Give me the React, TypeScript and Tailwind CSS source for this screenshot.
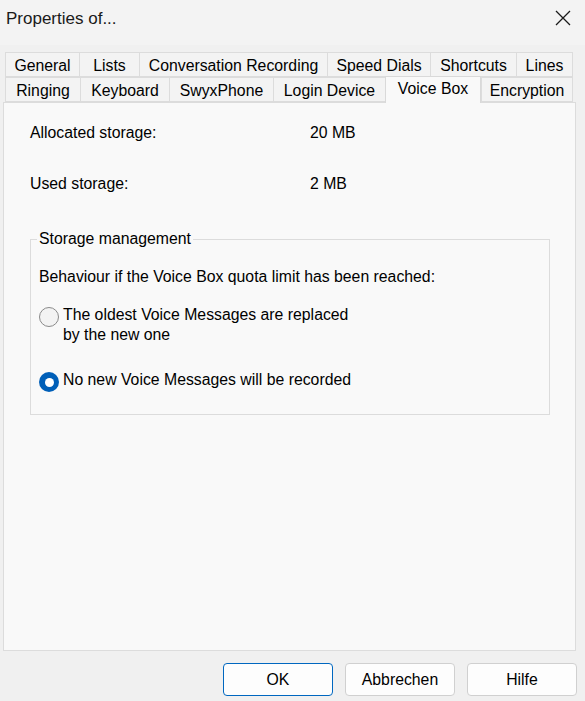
import React from "react";

const row1 = [
  { label: "General", w: 74 },
  { label: "Lists", w: 60 },
  { label: "Conversation Recording", w: 188 },
  { label: "Speed Dials", w: 103 },
  { label: "Shortcuts", w: 86 },
  { label: "Lines", w: 57 },
];

const row2 = [
  { label: "Ringing", w: 75 },
  { label: "Keyboard", w: 89 },
  { label: "SwyxPhone", w: 104 },
  { label: "Login Device", w: 112 },
  { label: "Voice Box", w: 96, active: true },
  { label: "Encryption", w: 92 },
];

const Tab = ({ label, w, active }: { label: string; w: number; active?: boolean }) => (
  <div
    style={{ width: w }}
    className={
      active
        ? "relative z-10 -mt-[1px] h-[27px] -mb-[1px] flex items-start justify-center pt-[1px] border border-b-0 border-[#d9d9d9] bg-[#f9f9f9] text-[15.8px] leading-[22px]"
        : "h-[25px] flex items-center justify-center pt-[2px] border border-r-0 border-[#dcdcdc] bg-[#f3f3f3] text-[15.8px] leading-[22px] last:border-r"
    }
  >
    {label}
  </div>
);

const Radio = ({ checked }: { checked?: boolean }) =>
  checked ? (
    <span className="mt-[2px] w-[20px] h-[20px] shrink-0 rounded-full bg-[#005fb8] flex items-center justify-center">
      <span className="w-[9px] h-[9px] rounded-full bg-white" />
    </span>
  ) : (
    <span className="mt-[2px] w-[20px] h-[20px] shrink-0 rounded-full border border-[#8a8a8a] bg-[#f3f3f3]" />
  );

export default function App() {
  return (
    <div
      className="w-[585px] h-[701px] bg-[#f0f0f0] text-[#000] flex flex-col"
      style={{ fontFamily: '"Liberation Sans", Arial, sans-serif' }}
    >
      <div className="h-[45px] bg-[#f3f3f3] flex items-start justify-between pl-[6px] pr-[14px] pt-[8px]">
        <span className="text-[17px] leading-[22px] text-[#1a1a1a]">Properties of...</span>
        <svg width="16" height="16" viewBox="0 0 16 16" className="mt-[2px]">
          <path d="M1 1 L15 15 M15 1 L1 15" stroke="#1a1a1a" strokeWidth="1.3" fill="none" />
        </svg>
      </div>

      <div className="pt-[7px] pl-[5px]">
        <div className="flex">
          {row1.map((t) => (
            <Tab key={t.label} {...t} />
          ))}
        </div>
        <div className="flex">
          {row2.map((t) => (
            <Tab key={t.label} {...t} />
          ))}
        </div>
      </div>

      <div className="mx-[3px] w-[573px] h-[549px] border border-[#dcdcdc] bg-[#f9f9f9] px-[26px] pt-[20px] text-[15.8px] leading-[20px]">
        <div className="flex">
          <span className="w-[280px]">Allocated storage:</span>
          <span>20 MB</span>
        </div>
        <div className="flex mt-[31px]">
          <span className="w-[280px]">Used storage:</span>
          <span>2 MB</span>
        </div>

        <div className="relative mt-[45px] w-[520px] h-[176px] border border-[#dcdcdc] px-[8px] pt-[27px]">
          <span className="absolute -top-[11px] left-[6px] px-[2px] bg-[#f9f9f9]">Storage management</span>
          <div>Behaviour if the Voice Box quota limit has been reached:</div>
          <label className="mt-[18px] flex gap-[4px]">
            <Radio />
            <span>
              The oldest Voice Messages are replaced
              <br />
              by the new one
            </span>
          </label>
          <label className="mt-[25px] flex gap-[4px]">
            <Radio checked />
            <span>No new Voice Messages will be recorded</span>
          </label>
        </div>
      </div>

      <div className="flex justify-end gap-[12px] pr-[8px] pt-[12px] text-[15.8px]">
        <button className="w-[110px] h-[33px] rounded-[4px] border border-[#0067c0] bg-[#fdfdfd]">OK</button>
        <button className="w-[110px] h-[33px] rounded-[4px] border border-[#d0d0d0] bg-[#fdfdfd]">Abbrechen</button>
        <button className="w-[110px] h-[33px] rounded-[4px] border border-[#d0d0d0] bg-[#fdfdfd]">Hilfe</button>
      </div>
    </div>
  );
}
